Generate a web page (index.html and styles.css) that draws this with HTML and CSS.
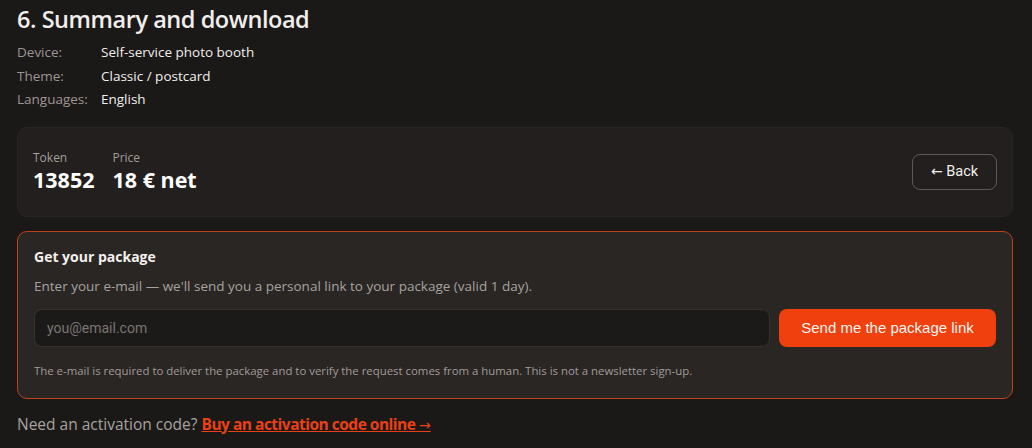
FILE: index.html
```html
<!DOCTYPE html>
<html lang="en">
<head>
<meta charset="utf-8">
<title>Summary and download</title>
<link rel="stylesheet" href="styles.css">
</head>
<body>
<main class="page">
  <h1 class="title">6. Summary and download</h1>
  <dl class="summary">
    <div class="summary-row"><dt>Device:</dt><dd>Self-service photo booth</dd></div>
    <div class="summary-row"><dt>Theme:</dt><dd>Classic / postcard</dd></div>
    <div class="summary-row"><dt>Languages:</dt><dd>English</dd></div>
  </dl>

  <section class="card token-card">
    <div class="stats">
      <div class="stat">
        <div class="stat-label">Token</div>
        <div class="stat-value">13852</div>
      </div>
      <div class="stat">
        <div class="stat-label">Price</div>
        <div class="stat-value">18 € net</div>
      </div>
    </div>
    <button class="btn-back" type="button"><span class="arrow">←</span> Back</button>
  </section>

  <section class="card package-card">
    <h2 class="package-title">Get your package</h2>
    <p class="package-desc">Enter your e-mail — we'll send you a personal link to your package (valid 1 day).</p>
    <form class="package-form">
      <input class="email-input" type="email" placeholder="you@email.com">
      <button class="btn-send" type="button">Send me the package link</button>
    </form>
    <p class="package-note">The e-mail is required to deliver the package and to verify the request comes from a human. This is not a newsletter sign-up.</p>
  </section>

  <p class="footer-line">Need an activation code? <a class="buy-link" href="#">Buy an activation code online <span class="link-arrow">→</span></a></p>
</main>
</body>
</html>
```

FILE: styles.css
```css
* { box-sizing: border-box; }

html, body {
  margin: 0;
  background: #1b1918;
}

body {
  font-family: "Open Sans", "Noto Sans", sans-serif;
  color: #ece9e6;
}

.page {
  padding: 3px 19px 0 17px;
}

.title {
  margin: 0;
  font-size: 23.5px;
  line-height: 32px;
  font-weight: 600;
  letter-spacing: -0.45px;
  color: #f1eeeb;
}

.summary {
  margin: 6px 0 0;
  font-size: 13.5px;
  line-height: 23.5px;
}

.summary-row {
  display: flex;
}

.summary-row dt {
  width: 84px;
  color: #9b9692;
}

.summary-row dd {
  margin: 0;
  color: #f1eeeb;
}

.card {
  border-radius: 10px;
}

.token-card {
  margin-top: 15px;
  background: #221f1e;
  border: 1px solid #282524;
  padding: 22px 15px;
  display: flex;
  align-items: center;
  justify-content: space-between;
}

.stats {
  display: flex;
  gap: 18px;
}

.stat-label {
  font-size: 12px;
  line-height: 16px;
  color: #a39e9a;
}

.stat-value {
  font-size: 21.5px;
  line-height: 28px;
  font-weight: 700;
  color: #ffffff;
}

.btn-back {
  height: 36px;
  width: 85px;
  background: transparent;
  border: 1px solid #5e5955;
  border-radius: 8px;
  color: #f1eeeb;
  font-family: Roboto, sans-serif;
  font-size: 14.5px;
  padding: 0;
}

.btn-back .arrow {
  font-family: "DejaVu Sans", sans-serif;
  font-size: 14px;
}

.package-card {
  margin-top: 14px;
  background: #2a2624;
  border: 1px solid #c1401d;
  padding: 15px 16px 19px;
}

.package-title {
  margin: 0;
  font-size: 14px;
  line-height: 20px;
  font-weight: 700;
  color: #f3f0ed;
}

.package-desc {
  margin: 9px 0 0;
  font-size: 13.5px;
  line-height: 20px;
  color: #a7a29e;
}

.package-form {
  margin: 13px 0 0;
  display: flex;
  gap: 9px;
}

.email-input {
  flex: 1;
  height: 38px;
  background: #1c1a19;
  border: 1px solid #37332f;
  border-radius: 8px;
  padding: 0 12px;
  font-family: Roboto, sans-serif;
  font-size: 14px;
  color: #eeeeee;
  outline: none;
}

.email-input::placeholder {
  color: #7a7572;
}

.btn-send {
  width: 217px;
  height: 38px;
  background: #f0400e;
  border: none;
  border-radius: 8px;
  color: #fff5ef;
  font-family: "Liberation Sans", Arial, sans-serif;
  font-size: 15px;
  padding: 0;
}

.package-note {
  margin: 16px 0 0;
  font-size: 11.4px;
  line-height: 16px;
  color: #a09b97;
}

.footer-line {
  margin: 14px 0 0;
  font-size: 15.5px;
  line-height: 22px;
  color: #a7a29e;
}

.buy-link {
  color: #ea4016;
  font-weight: 700;
  letter-spacing: -0.5px;
  text-decoration: underline;
}

.link-arrow {
  font-family: "DejaVu Sans", sans-serif;
  font-weight: 400;
  font-size: 14px;
  letter-spacing: 0;
}
```
